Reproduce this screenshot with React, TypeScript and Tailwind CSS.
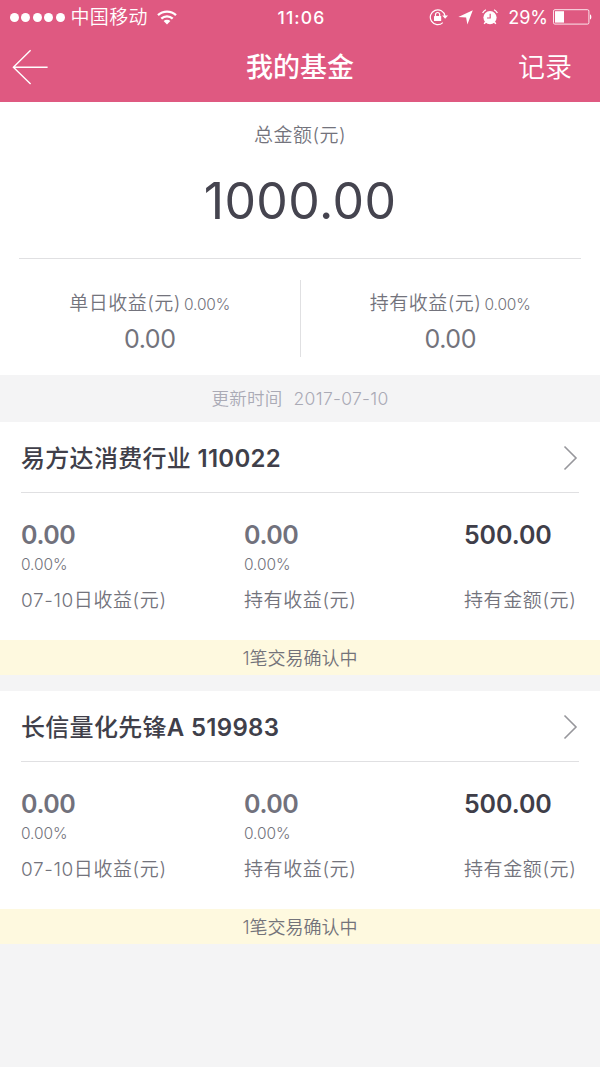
import type { ReactNode } from 'react';

type Fund = {
  name: string;
  code: string;
  dayProfit: string;
  dayRate: string;
  holdProfit: string;
  holdRate: string;
  amount: string;
  notice: string;
};

const funds: Fund[] = [
  {
    name: '易方达消费行业',
    code: ' 110022',
    dayProfit: '0.00',
    dayRate: '0.00%',
    holdProfit: '0.00',
    holdRate: '0.00%',
    amount: '500.00',
    notice: '1笔交易确认中',
  },
  {
    name: '长信量化先锋',
    code: 'A 519983',
    dayProfit: '0.00',
    dayRate: '0.00%',
    holdProfit: '0.00',
    holdRate: '0.00%',
    amount: '500.00',
    notice: '1笔交易确认中',
  },
];

function WifiIcon() {
  return (
    <svg width="20" height="15" viewBox="0 0 20 15" fill="none" stroke="white" strokeWidth="2.3">
      <path d="M1 5.2a13 13 0 0 1 18 0" />
      <path d="M4.3 8.7a8.2 8.2 0 0 1 11.4 0" />
      <path d="M10 14.4 6.6 11a4.9 4.9 0 0 1 6.8 0z" fill="white" stroke="none" />
    </svg>
  );
}

function RotationLockIcon() {
  return (
    <svg width="20" height="18" viewBox="0 0 20 18" fill="none" stroke="white">
      <path d="M13.8 14.6A7.4 7.4 0 1 1 16 8" strokeWidth="1.2" />
      <path d="M13.2 7.4h5.8l-2.9 3.4z" fill="white" stroke="none" />
      <rect x="5" y="8" width="7.2" height="5" rx="0.6" fill="white" stroke="none" />
      <path d="M6.5 8.2V6.6a2.1 2.1 0 0 1 4.2 0v1.6" strokeWidth="1.2" />
    </svg>
  );
}

function LocationIcon() {
  return (
    <svg width="15" height="15" viewBox="0 0 15 15" fill="white">
      <path d="M14.8.3 9.4 14.6 8.1 7.4.3 6.9z" />
    </svg>
  );
}

function AlarmIcon() {
  return (
    <svg width="16" height="16" viewBox="0 0 16 16" fill="none">
      <circle cx="8" cy="8.6" r="6.6" fill="white" />
      <path d="M.6 4A9 9 0 0 1 3.9.8M15.4 4A9 9 0 0 0 12.1.8" stroke="white" strokeWidth="1.3" />
      <path d="m3.6 13-1.4 1.9M12.4 13l1.4 1.9" stroke="white" strokeWidth="1.5" />
      <path d="M8.2 4.8v4.2H5" stroke="#df5981" strokeWidth="1.2" />
    </svg>
  );
}

function BatteryIcon() {
  return (
    <svg width="39" height="16" viewBox="0 0 39 16" fill="none">
      <rect x="0.5" y="0.7" width="35.4" height="14.4" rx="1.4" stroke="white" strokeOpacity="0.85" />
      <rect x="2" y="2.2" width="9" height="11.4" fill="white" />
      <path d="M37 5.2c1.8.6 1.8 4.8 0 5.4z" fill="white" />
    </svg>
  );
}

function StatusBar() {
  return (
    <div className="grid grid-cols-[1fr_60px_1fr] items-center h-8 text-[18px] leading-8">
      <div className="flex items-center pl-[10px]">
        <div className="flex gap-[2.4px]">
          {[...Array(5)].map((_, i) => (
            <span key={i} className="w-[9px] h-[9px] rounded-full bg-white" />
          ))}
        </div>
        <span className="ml-[6px] mr-[9px] pt-[2px] text-[19px] font-[350] tracking-[0.3px]">中国移动</span>
        <WifiIcon />
      </div>
      <span className="pl-[3px] pt-px text-center text-[17.5px] font-medium tracking-[1.2px] whitespace-nowrap">11:06</span>
      <div className="flex items-center justify-end pr-[8px]">
        <RotationLockIcon />
        <span className="ml-[9px] mr-[9px]">
          <LocationIcon />
        </span>
        <AlarmIcon />
        <span className="ml-[10px] mr-[5px] pt-px">29%</span>
        <BatteryIcon />
      </div>
    </div>
  );
}

function NavBar() {
  return (
    <div className="grid grid-cols-[1fr_120px_1fr] items-center h-[70px] pl-[12px] pr-[28px]">
      <svg width="36" height="36" viewBox="0 0 36 36" fill="none" stroke="white" strokeWidth="1.4" className="-mt-px">
        <path d="M18.6 1.3 1.4 18.3l17.2 16.8M1.4 18.3h34.2" />
      </svg>
      <h1 className="pt-[3px] text-[27px] font-medium text-center whitespace-nowrap translate-x-2">我的基金</h1>
      <span className="pt-[3px] text-[27px] font-[350] text-right">记录</span>
    </div>
  );
}

function SummaryItem({ label, rate, value }: { label: string; rate: string; value: string }) {
  return (
    <div className="flex-1 pt-3 text-center text-[#73737c]">
      <div className="h-6 leading-6 text-[19px] font-[350] tracking-[0.5px] whitespace-nowrap">
        {label}
        <span className="ml-[3px] text-[15.5px] tracking-[-0.1px]">{rate}</span>
      </div>
      <div className="mt-[8px] h-[30px] leading-[30px] text-[25px] tracking-[-0.4px]">{value}</div>
    </div>
  );
}

function Stat({ value, rate, label, strong }: { value: string; rate?: string; label: ReactNode; strong?: boolean }) {
  return (
    <div className="text-[#73737c] whitespace-nowrap">
      <div
        className={`h-[30px] leading-[30px] text-[25px] font-semibold ${
          strong ? 'text-[#3f3e49] tracking-[-0.1px]' : 'text-[#71717c] tracking-[-0.4px]'
        }`}
      >
        {value}
      </div>
      <div className="mt-[6px] h-[18px] leading-[18px] text-[15.5px] font-[350] tracking-[-0.1px]">{rate}</div>
      <div className="mt-[15px] h-6 leading-6 text-[19px] font-[350] tracking-[0.6px]">{label}</div>
    </div>
  );
}

function FundCard({ fund }: { fund: Fund }) {
  return (
    <section className="bg-white">
      <div className="px-[21px]">
        <div className="flex items-center justify-between h-[71px] pt-[1px] border-b border-[#e0e0e2]">
          <h2 className="pt-[2px] text-[24px] font-medium tracking-[0.3px] text-[#403f4a] whitespace-pre">
            {fund.name}
            <span className="font-semibold">{fund.code}</span>
          </h2>
          <svg width="16" height="26" viewBox="0 0 16 26" fill="none" stroke="#97979c" strokeWidth="1.6">
            <path d="M1.5 1.5 13 13 1.5 24.5" />
          </svg>
        </div>
        <div className="grid grid-cols-[223px_220px_1fr] pt-[27px] pb-[27px]">
          <Stat value={fund.dayProfit} rate={fund.dayRate} label="07-10日收益(元)" />
          <Stat value={fund.holdProfit} rate={fund.holdRate} label="持有收益(元)" />
          <Stat value={fund.amount} label="持有金额(元)" strong />
        </div>
      </div>
      <div className="h-[35px] leading-[37px] bg-[#fef9df] text-center text-[18px] font-[350] text-[#73737a]">
        {fund.notice}
      </div>
    </section>
  );
}

export default function App() {
  return (
    <div className="w-[600px] h-[1067px] overflow-hidden bg-[#f4f4f5] font-[Inter,'Noto_Sans_CJK_SC',sans-serif]">
      <header className="bg-[#df5981] text-white">
        <StatusBar />
        <NavBar />
      </header>

      <section className="bg-white px-[19px] pt-[21px] pb-[18px]">
        <div className="h-[25px] leading-[25px] text-[19px] font-[350] tracking-[0.5px] text-center text-[#73737c]">
          总金额(元)
        </div>
        <div className="mt-[23px] h-[60px] leading-[60px] text-[50px] tracking-[0.4px] text-center text-[#45444f]">
          1000.00
        </div>
        <div className="mt-[27px] h-px bg-[#e0e0e2]" />
        <div className="flex mt-[21px] h-[77px] -mx-[19px]">
          <SummaryItem label="单日收益(元)" rate="0.00%" value="0.00" />
          <div className="w-px bg-[#e0e0e2]" />
          <SummaryItem label="持有收益(元)" rate="0.00%" value="0.00" />
        </div>
      </section>

      <div className="h-[47px] leading-[48px] text-center text-[17.5px] font-[350] tracking-[0.3px] text-[#aaaab5]">
        更新时间<span className="ml-[11px]">2017-07-10</span>
      </div>

      <div className="flex flex-col gap-4">
        {funds.map((fund) => (
          <FundCard key={fund.code} fund={fund} />
        ))}
      </div>
    </div>
  );
}
